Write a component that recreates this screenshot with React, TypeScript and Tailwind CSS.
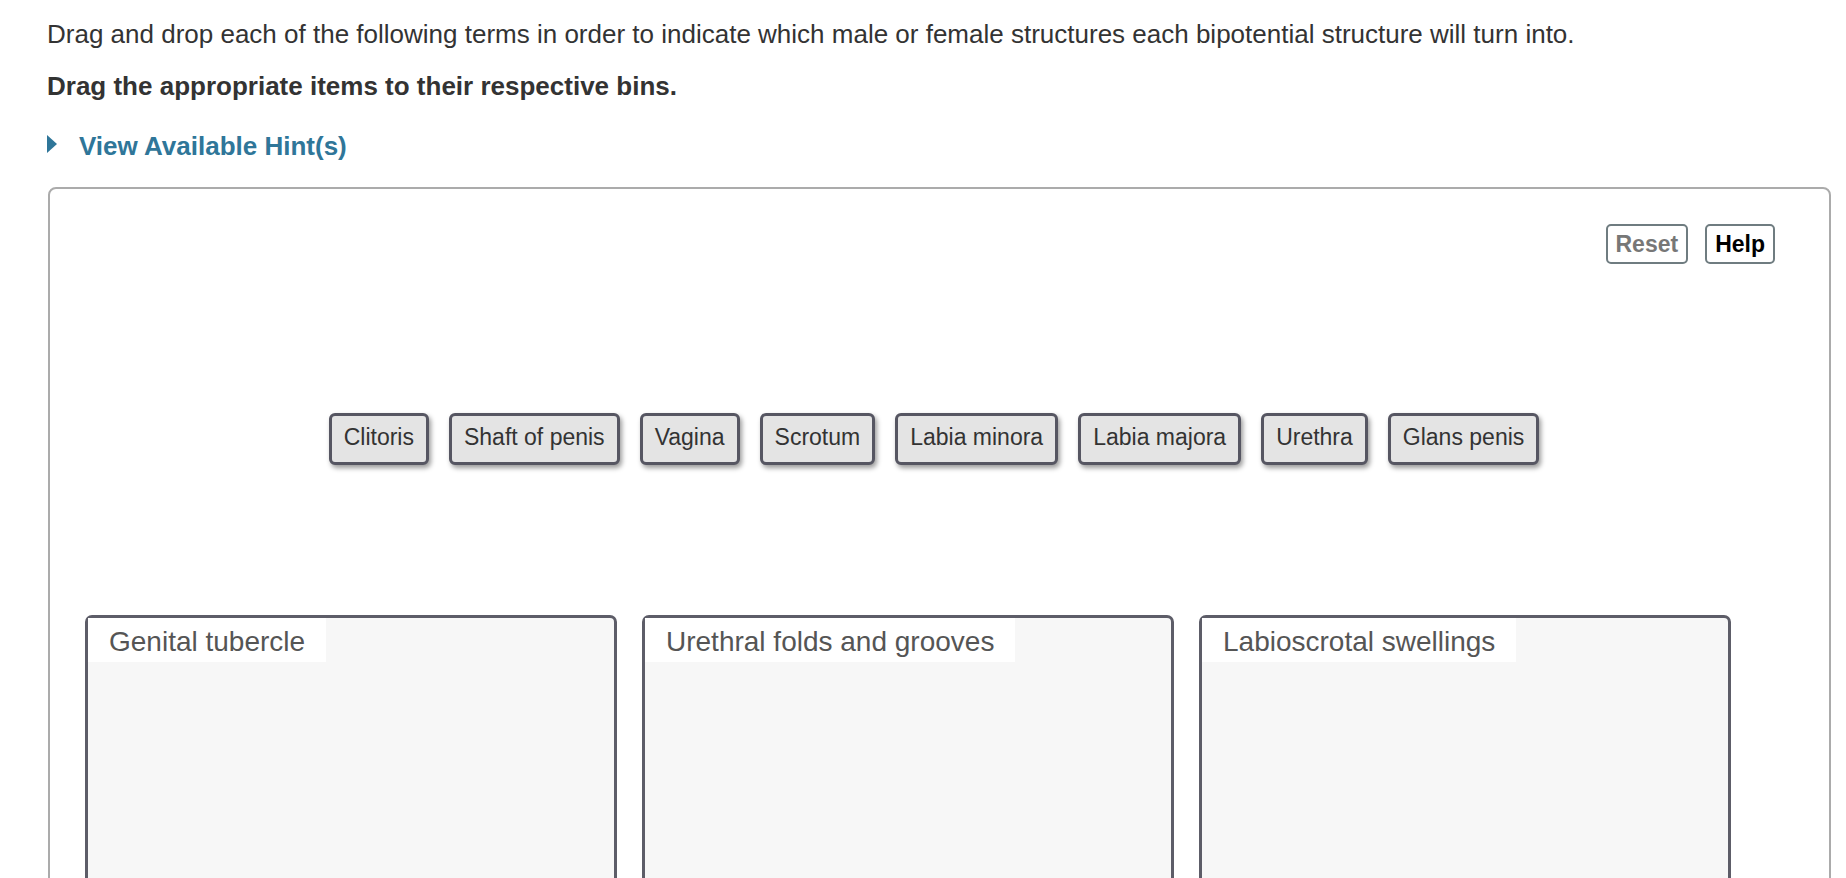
const terms = [
  "Clitoris",
  "Shaft of penis",
  "Vagina",
  "Scrotum",
  "Labia minora",
  "Labia majora",
  "Urethra",
  "Glans penis",
];

const bins = ["Genital tubercle", "Urethral folds and grooves", "Labioscrotal swellings"];

function Chip({ label }: { label: string }) {
  return (
    <div className="rounded-[6px] border-[3px] border-[#565662] bg-[#e4e4e4] px-[12px] pt-[6px] pb-[10px] text-[23px] leading-[30px] text-[#333] whitespace-nowrap shadow-[2px_3px_5px_rgba(0,0,0,0.4)]">
      {label}
    </div>
  );
}

function Bin({ title }: { title: string }) {
  return (
    <div className="h-[420px] w-[532px] shrink-0 rounded-[7px] border-[3px] border-[#5d5d68] bg-[#f7f7f7]">
      <div className="inline-block bg-white px-[21px] pt-[4px] text-[28px] leading-[40px] text-[#555]">
        {title}
      </div>
    </div>
  );
}

export default function App() {
  return (
    <div
      className="min-h-screen bg-white pl-[47px] pr-[15px] pt-[19px] text-[#333]"
      style={{ fontFamily: '"Liberation Sans", Arial, Helvetica, sans-serif' }}
    >
      <p className="text-[26px] leading-[30px]">
        Drag and drop each of the following terms in order to indicate which male or female structures each
        bipotential structure will turn into.
      </p>
      <p className="mt-[22px] text-[26px] font-bold leading-[30px]">
        Drag the appropriate items to their respective bins.
      </p>

      {/* Hints toggle */}
      <div className="mt-[30px] flex items-start gap-[22px] text-[#2f7699]">
        <svg width="10" height="18" viewBox="0 0 10 18" className="mt-[4px] shrink-0">
          <polygon points="0,0 10,9 0,18" fill="currentColor" />
        </svg>
        <span className="text-[26px] font-bold leading-[30px]">View Available Hint(s)</span>
      </div>

      {/* Drag and drop area */}
      <div className="ml-px mt-[26px] h-[800px] rounded-[8px] border-2 border-[#ababab] pt-[35px]">
        <div className="flex justify-end gap-[17px] pr-[54px]">
          <button className="h-[40px] rounded-[5px] border-2 border-[#6f7c80] bg-white px-[8px] text-[23px] font-bold leading-[36px] text-[#777]">
            Reset
          </button>
          <button className="h-[40px] rounded-[5px] border-2 border-[#6f7c80] bg-white px-[8px] text-[23px] font-bold leading-[36px] text-black">
            Help
          </button>
        </div>

        <div className="mt-[149px] flex justify-center gap-[20px] pr-[11px]">
          {terms.map((t) => (
            <Chip key={t} label={t} />
          ))}
        </div>

        <div className="mt-[150px] flex gap-[25px] pl-[35px]">
          {bins.map((b) => (
            <Bin key={b} title={b} />
          ))}
        </div>
      </div>
    </div>
  );
}
